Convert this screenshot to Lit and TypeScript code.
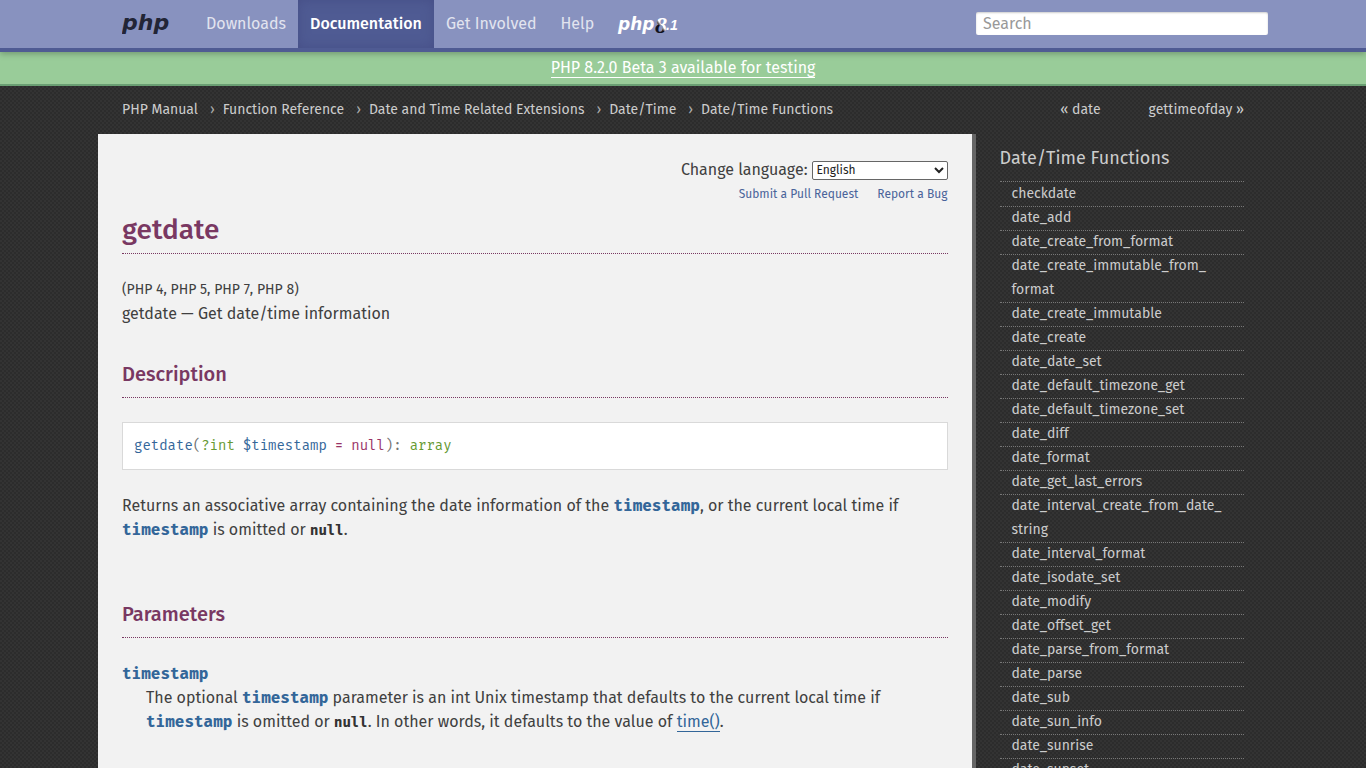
import { LitElement, html, css } from "lit";
import { customElement, property } from "lit/decorators.js";

const NAV = ["Downloads", "Documentation", "Get Involved", "Help"];

const CRUMBS = [
  "PHP Manual",
  "Function Reference",
  "Date and Time Related Extensions",
  "Date/Time",
  "Date/Time Functions",
];

const FUNCTIONS = [
  "checkdate",
  "date_add",
  "date_create_from_format",
  "date_create_immutable_from_format",
  "date_create_immutable",
  "date_create",
  "date_date_set",
  "date_default_timezone_get",
  "date_default_timezone_set",
  "date_diff",
  "date_format",
  "date_get_last_errors",
  "date_interval_create_from_date_string",
  "date_interval_format",
  "date_isodate_set",
  "date_modify",
  "date_offset_get",
  "date_parse_from_format",
  "date_parse",
  "date_sub",
  "date_sun_info",
  "date_sunrise",
  "date_sunset",
];

/* Long names may wrap after any underscore. */
const breakable = (name: string) =>
  name.split("_").map((part, i) => (i ? html`_<wbr>${part}` : part));

@customElement("site-header")
export class SiteHeader extends LitElement {
  @property() active = "Documentation";

  static styles = css`
    :host {
      display: block;
      position: relative;
      background: #8892bf;
      border-bottom: 4px solid #4f5b93;
      box-shadow: 0 2px 6px rgba(0, 0, 0, 0.25);
    }
    .inner {
      display: flex;
      align-items: flex-start;
      max-width: 1170px;
      margin: 0 auto;
    }
    .brand {
      display: block;
      margin-left: 24px;
      height: 48px;
    }
    .links {
      display: flex;
      align-items: center;
      flex: 1;
      margin: 0 0 0 24px;
      padding: 0;
      list-style: none;
    }
    .link {
      display: block;
      padding: 0 12px;
      line-height: 48px;
      font-size: 16px;
      color: #e2e4ef;
      text-decoration: none;
    }
    .link.current {
      background: #4f5b93;
      color: #fff;
      font-weight: 500;
      box-shadow: inset 0 0 12px #464f87;
    }
    .release {
      display: block;
      height: 48px;
      margin-left: 11px;
    }
    .search {
      width: 292px;
      padding-top: 12px;
    }
    .search input {
      display: block;
      box-sizing: border-box;
      width: 100%;
      height: 23px;
      padding: 0 7px;
      border: 0;
      border-radius: 2px;
      background: #fff;
      box-shadow: inset 0 1px 2px rgba(0, 0, 0, 0.2);
      font: 16px "Fira Sans", Roboto, sans-serif;
      color: #333;
    }
    .search input::placeholder {
      color: #999;
      opacity: 1;
    }
    .word {
      font-family: "DejaVu Sans", sans-serif;
      font-style: italic;
      font-weight: 700;
    }
    .minor {
      font-family: "Liberation Sans", sans-serif;
      font-style: italic;
      font-weight: 700;
    }
    .numeral {
      font-family: "Liberation Serif", serif;
      font-style: italic;
      font-weight: 700;
    }
  `;

  render() {
    return html`
      <nav class="inner">
        <a class="brand" href="#" aria-label="php">
          <svg width="48" height="48" viewBox="0 0 48 48">
            <text class="word" x="0" y="30" font-size="22" fill="#222536">php</text>
          </svg>
        </a>
        <ul class="links">
          ${NAV.map(
            (label) => html`<li>
              <a class="link ${label === this.active ? "current" : ""}" href="#">${label}</a>
            </li>`
          )}
          <li>
            <a class="release" href="#" aria-label="php8.1">
              <svg width="64" height="48" viewBox="0 0 64 48">
                <defs>
                  <linearGradient id="ribbon" x1="0" y1="1" x2="0.6" y2="0">
                    <stop offset="0.5" stop-color="#10121f" />
                    <stop offset="0.62" stop-color="#fff" />
                  </linearGradient>
                </defs>
                <text class="word" x="1" y="30" font-size="17" fill="#fff">php</text>
                <text class="numeral" x="38" y="33" font-size="24" fill="url(#ribbon)">8</text>
                <text class="minor" x="49" y="30" font-size="14" fill="#fff">.1</text>
              </svg>
            </a>
          </li>
        </ul>
        <form class="search" role="search">
          <input type="search" placeholder="Search" aria-label="Search" />
        </form>
      </nav>
    `;
  }
}

@customElement("function-list")
export class FunctionList extends LitElement {
  static styles = css`
    :host {
      display: block;
      padding: 12px 24px 0;
      color: #ccc;
    }
    .title {
      margin: 0 0 11px;
      font-size: 18px;
      line-height: 24px;
      font-weight: 400;
    }
    .list {
      margin: 0;
      padding: 0;
      list-style: none;
      border-top: 1px dotted #777;
    }
    .item {
      margin-bottom: -1px;
      border-bottom: 1px dotted #777;
    }
    .item a {
      display: block;
      padding: 0 12px;
      font-size: 14px;
      line-height: 24px;
      color: #ccc;
      text-decoration: none;
    }
  `;

  render() {
    return html`
      <h3 class="title">Date/Time Functions</h3>
      <ul class="list">
        ${FUNCTIONS.map((name) => html`<li class="item"><a href="#">${breakable(name)}</a></li>`)}
      </ul>
    `;
  }
}

@customElement("manual-page")
export class ManualPage extends LitElement {
  static styles = css`
    :host {
      display: block;
      box-sizing: border-box;
      padding: 24px 24px 48px;
      background: #f2f2f2;
      border-right: 4px solid #666;
      color: #404040;
      font: 400 16px/24px "Fira Sans", "Noto Sans", sans-serif;
    }
    a {
      color: #369;
    }
    .language {
      display: flex;
      justify-content: flex-end;
      align-items: center;
      gap: 4px;
    }
    .language select {
      width: 136px;
      height: 19px;
      padding: 0;
      border: 1px solid #666;
      border-radius: 2px;
      background: #fff;
      color: #222;
      font: 12px "Fira Sans", Roboto, sans-serif;
    }
    .edit {
      display: flex;
      justify-content: flex-end;
      gap: 19px;
      font-size: 12px;
    }
    .edit a {
      color: #4a649a;
      text-decoration: none;
    }
    h1,
    h2 {
      margin: 0 0 24px;
      border-bottom: 1px dotted #793862;
      color: #793862;
      font-family: "Fira Sans", Roboto, sans-serif;
      font-weight: 500;
    }
    h1 {
      font-size: 28px;
      line-height: 47px;
    }
    h2 {
      padding-top: 2px;
      font-size: 20px;
      line-height: 45px;
    }
    p,
    dl,
    dd {
      margin: 0;
    }
    .versions {
      font-size: 14px;
    }
    .purpose {
      margin-bottom: 24px;
    }
    .synopsis {
      display: flex;
      gap: 8px;
      margin-bottom: 24px;
      padding: 11px;
      border: 1px solid #d9d9d9;
      background: #fff;
      font: 14px/24px "Fira Mono", "DejaVu Sans Mono", monospace;
      color: #737373;
    }
    .name {
      color: #369;
    }
    .type {
      color: #693;
    }
    .init {
      color: #936;
    }
    .summary {
      margin-bottom: 48px;
    }
    .param,
    .const {
      font-family: "Fira Mono", "DejaVu Sans Mono", monospace;
      font-weight: 700;
      font-style: normal;
      line-height: 1;
    }
    .param {
      font-size: 16px;
      color: #369;
    }
    .const {
      font-size: 14px;
      color: #333;
    }
    dt {
      height: 24px;
    }
    dd {
      padding-left: 24px;
    }
    .ref {
      text-decoration: none;
      border-bottom: 1px solid #369;
    }
  `;

  render() {
    const ts = html`<code class="param">timestamp</code>`;
    const nil = html`<code class="const">null</code>`;
    return html`
      <form class="language">
        <label for="lang">Change language:</label>
        <select id="lang">
          <option>English</option>
        </select>
      </form>
      <div class="edit"><a href="#">Submit a Pull Request</a><a href="#">Report a Bug</a></div>
      <h1>getdate</h1>
      <p class="versions">(PHP 4, PHP 5, PHP 7, PHP 8)</p>
      <p class="purpose">getdate — Get date/time information</p>
      <h2>Description</h2>
      <div class="synopsis">
        <span><span class="name">getdate</span>(<span class="type">?int</span></span>
        <span class="name">$timestamp</span>
        <span class="init">=</span>
        <span><span class="init">null</span>):</span>
        <span class="type">array</span>
      </div>
      <p class="summary">
        Returns an associative array containing the date information of the ${ts}, or the current
        local time if ${ts} is omitted or ${nil}.
      </p>
      <h2>Parameters</h2>
      <dl>
        <dt>${ts}</dt>
        <dd>
          The optional ${ts} parameter is an int Unix timestamp that defaults to the current local
          time if ${ts} is omitted or ${nil}. In other words, it defaults to the value of
          <a class="ref" href="#">time()</a>.
        </dd>
      </dl>
    `;
  }
}

@customElement("app-root")
export class AppRoot extends LitElement {
  static styles = css`
    :host {
      display: block;
      min-height: 100vh;
      font-family: "Fira Sans", Roboto, sans-serif;
      background: repeating-conic-gradient(#2c2c2c 0 25%, #333 0 50%) 0 0 / 4px 4px;
    }
    .announce {
      display: block;
      height: 32px;
      border-bottom: 2px solid #6a9f73;
      background: #9c9;
      text-align: center;
      line-height: 31px;
      font-size: 16px;
    }
    .announce a {
      border-bottom: 1px solid #fff;
      color: #fff;
      text-decoration: none;
    }
    .trail {
      display: flex;
      justify-content: space-between;
      max-width: 1122px;
      margin: 0 auto;
      padding: 0 24px;
      line-height: 48px;
      font-size: 14px;
      color: #ccc;
    }
    .trail a {
      color: #ccc;
      text-decoration: none;
    }
    .crumbs {
      display: flex;
      margin: 0;
      padding: 0;
      list-style: none;
    }
    .crumb + .crumb::before {
      content: "›";
      margin: 0 8px 0 12px;
      color: #aaa;
    }
    .siblings {
      display: flex;
      gap: 48px;
    }
    .columns {
      display: grid;
      grid-template-columns: minmax(0, 3fr) minmax(0, 1fr);
      max-width: 1170px;
      margin: 0 auto;
    }
  `;

  render() {
    return html`
      <site-header></site-header>
      <div class="announce"><a href="#">PHP 8.2.0 Beta 3 available for testing</a></div>
      <div class="trail">
        <ul class="crumbs">
          ${CRUMBS.map((c) => html`<li class="crumb"><a href="#">${c}</a></li>`)}
        </ul>
        <div class="siblings"><a href="#">« date</a><a href="#">gettimeofday »</a></div>
      </div>
      <div class="columns">
        <manual-page></manual-page>
        <function-list></function-list>
      </div>
    `;
  }
}
